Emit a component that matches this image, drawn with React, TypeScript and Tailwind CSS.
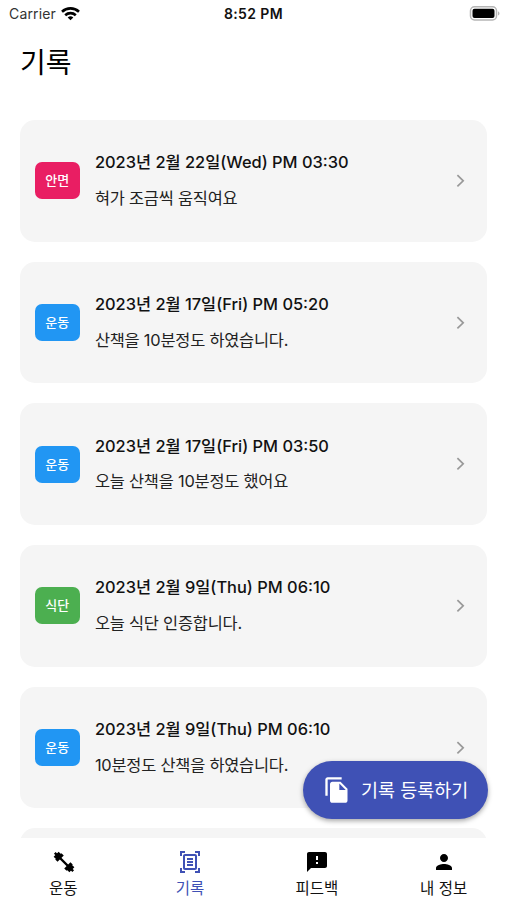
import React from "react";
import { MdFileCopy, MdFeedback, MdPerson, MdOutlineDocumentScanner } from "react-icons/md";

const font = "font-['Inter','Noto_Sans_CJK_KR',sans-serif]";

type RecordItem = { tag: string; color: string; date: string; memo: string };

const records: RecordItem[] = [
  { tag: "안면", color: "bg-[#e91e63]", date: "2023년 2월 22일(Wed) PM 03:30", memo: "혀가 조금씩 움직여요" },
  { tag: "운동", color: "bg-[#2196f3]", date: "2023년 2월 17일(Fri) PM 05:20", memo: "산책을 10분정도 하였습니다." },
  { tag: "운동", color: "bg-[#2196f3]", date: "2023년 2월 17일(Fri) PM 03:50", memo: "오늘 산책을 10분정도 했어요" },
  { tag: "식단", color: "bg-[#4caf50]", date: "2023년 2월 9일(Thu) PM 06:10", memo: "오늘 식단 인증합니다." },
  { tag: "운동", color: "bg-[#2196f3]", date: "2023년 2월 9일(Thu) PM 06:10", memo: "10분정도 산책을 하였습니다." },
];

function WifiIcon() {
  return (
    <svg width="19" height="15" viewBox="0 0 19 15" fill="none" stroke="#000" strokeWidth="2.6">
      <path d="M1 4.7C5.8.3 13.2.3 18 4.7" />
      <path d="M4.2 8.2c3-2.8 7.6-2.8 10.6 0" />
      <path d="M9.5 13.3 6.7 10.5a4 4 0 0 1 5.6 0z" fill="#000" stroke="none" />
    </svg>
  );
}

function DumbbellIcon() {
  return (
    <svg width="22" height="22" viewBox="0 0 22 22" fill="none" stroke="#000">
      <path d="M6 6 16 16" strokeWidth="2.4" />
      <path d="M9.6 3.4 3.4 9.6M6.8 1.8 1.8 6.8M18.6 12.4 12.4 18.6M20.2 15.2 15.2 20.2" strokeWidth="3.3" />
      <path d="M1.8 1.8 4 4M18 18l2.2 2.2" strokeWidth="2.4" />
    </svg>
  );
}

function RecordCard({ item }: { item: RecordItem }) {
  return (
    <article className="flex h-[121.7px] shrink-0 items-center rounded-[15px] bg-[#f5f5f5] pl-[14.5px] pr-[22px]">
      <span className={`flex h-[37px] w-[45.5px] items-center justify-center rounded-[7px] pr-px pb-px text-[13px] leading-[20px] font-medium text-white ${item.color}`}>{item.tag}</span>
      <div className="ml-[14.5px] flex flex-1 flex-col gap-[11.5px] pb-[1.5px] text-[16.4px] leading-6 whitespace-nowrap">
        <span className="font-medium text-[#111]">{item.date}</span>
        <span className="tracking-[-0.22px] text-[#222]">{item.memo}</span>
      </div>
      <svg width="9" height="14" viewBox="0 0 9 14" fill="none" stroke="#999" strokeWidth="1.7"><path d="m1.4 1.2 5.8 5.6-5.8 5.6" /></svg>
    </article>
  );
}

export default function App() {
  return (
    <main className={`relative flex h-[900px] w-[507px] flex-col overflow-hidden bg-white text-[#111] ${font}`}>
      <div className="grid h-7 shrink-0 grid-cols-3 items-center pl-[9px] pr-[7px] text-[14px] leading-[20px]">
        <div className="flex items-center gap-[5px]"><span className="tracking-[0.15px] text-[#333]">Carrier</span><WifiIcon /></div>
        <span className="-ml-[2px] text-center text-[14px] font-semibold tracking-[0.4px]">8:52 PM</span>
        <svg className="-mt-[2px] justify-self-end" width="31" height="15" viewBox="0 0 31 15">
          <rect x="1.5" y=".8" width="26" height="13.2" rx="4" fill="#fff" stroke="#b5b5b5" strokeWidth="1.5" />
          <rect x="3.5" y="2.8" width="22" height="9.2" rx="2" fill="#000" />
          <path d="M29 5.2c2 .8 2 3.6 0 4.4z" fill="#b5b5b5" />
        </svg>
      </div>
      <header className="h-[92px] shrink-0 pl-[20px] pt-[15px]"><h1 className="text-[28px] leading-[40px] font-normal text-black">기록</h1></header>
      <section className="flex min-h-0 flex-1 flex-col gap-[20px] overflow-hidden pl-[20.4px] pr-[19.6px]">
        {records.map((item, i) => <RecordCard key={i} item={item} />)}
        <div className="h-[60px] shrink-0 rounded-t-[15px] bg-[#f5f5f5]" />
      </section>
      <nav className="grid h-[62px] shrink-0 grid-cols-4 bg-white pt-[12px] text-[15.5px] leading-[22px]">
        <div className="flex flex-col items-center gap-[4px]"><span className="flex h-6 items-center pl-[2px]"><DumbbellIcon /></span><span>운동</span></div>
        <div className="flex flex-col items-center gap-[4px] text-[#3f51b5]"><MdOutlineDocumentScanner size={24} /><span>기록</span></div>
        <div className="flex flex-col items-center gap-[4px]"><MdFeedback size={24} color="#000" /><span>피드백</span></div>
        <div className="flex flex-col items-center gap-[4px]"><MdPerson size={24} color="#000" /><span>내 정보</span></div>
      </nav>
      <button className="absolute top-[761px] left-[303px] flex h-[58px] w-[184.5px] items-center rounded-full bg-[#3f51b5] pl-[20px] text-white shadow-[0_2px_5px_rgba(0,0,0,0.35)]">
        <MdFileCopy size={28} /><span className="ml-[10px] text-[18.5px] leading-[26px] whitespace-nowrap">기록 등록하기</span>
      </button>
    </main>
  );
}
